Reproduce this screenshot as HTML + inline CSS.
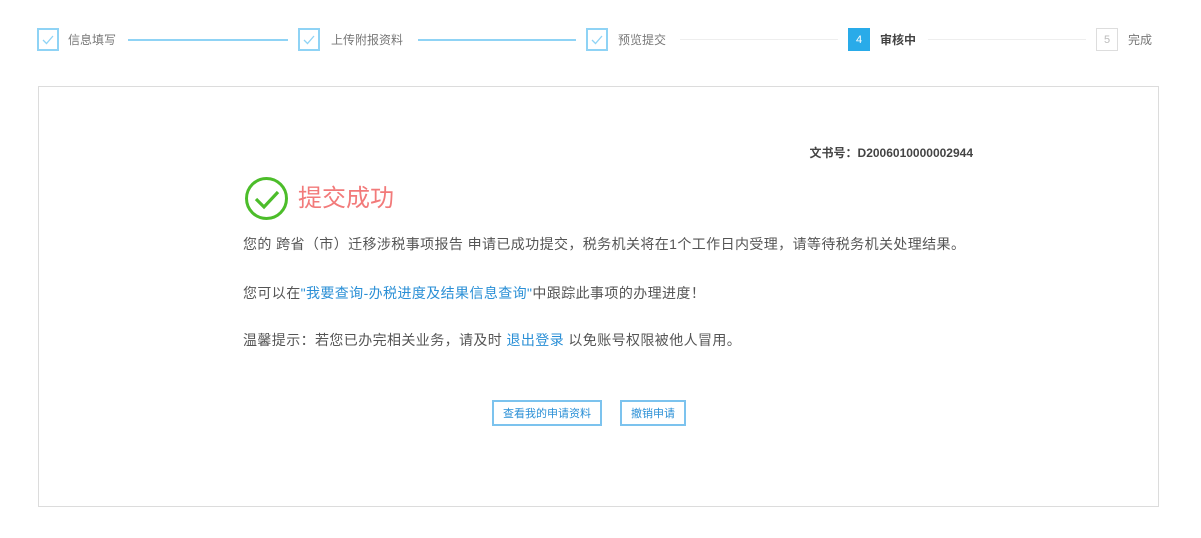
<!DOCTYPE html>
<html><head><meta charset="utf-8"><style>
*{margin:0;padding:0;box-sizing:border-box}
body{width:1201px;height:538px;background:#fff;font-family:"Liberation Sans","Noto Sans CJK SC",sans-serif;position:relative;overflow:hidden;color:#555}
.a{position:absolute}
.box{position:absolute;top:28px;width:22px;height:23px;border:2px solid #8fd3f5;display:flex;align-items:center;justify-content:center}
.lbl{position:absolute;top:32px;font-size:12px;color:#777;line-height:16px}
.ln{position:absolute;top:39px;height:2px}
p{position:absolute;left:243px;font-size:14px;letter-spacing:0.4px;color:#555;white-space:nowrap;line-height:18px}
.lk{color:#2a8fd6}
.btn{position:absolute;top:400px;height:26px;border:2px solid #7cc3ee;font-size:11px;color:#2a8fd6;display:flex;align-items:center;justify-content:center}
</style></head><body>
<div class="box" style="left:37px"><svg width="14" height="12"><path d="M2 6l3.5 3.5L12 2" fill="none" stroke="#8fd3f5" stroke-width="1.3"/></svg></div>
<div class="lbl" style="left:68px">信息填写</div>
<div class="ln" style="left:128px;width:160px;background:#8fd3f5"></div>
<div class="box" style="left:298px"><svg width="14" height="12"><path d="M2 6l3.5 3.5L12 2" fill="none" stroke="#8fd3f5" stroke-width="1.3"/></svg></div>
<div class="lbl" style="left:331px">上传附报资料</div>
<div class="ln" style="left:418px;width:158px;background:#8fd3f5"></div>
<div class="box" style="left:586px"><svg width="14" height="12"><path d="M2 6l3.5 3.5L12 2" fill="none" stroke="#8fd3f5" stroke-width="1.3"/></svg></div>
<div class="lbl" style="left:618px">预览提交</div>
<div class="ln" style="left:680px;width:158px;background:#eee;height:1px"></div>
<div class="box" style="left:848px;background:#29abe9;border-color:#29abe9;color:#fff;font-size:11px">4</div>
<div class="lbl" style="left:880px;color:#444;font-weight:bold">审核中</div>
<div class="ln" style="left:928px;width:158px;background:#eee;height:1px"></div>
<div class="box" style="left:1096px;border:1px solid #ddd;color:#bbb;font-size:11px">5</div>
<div class="lbl" style="left:1128px">完成</div>

<div class="a" style="left:38px;top:86px;width:1121px;height:421px;border:1px solid #dcdcdc"></div>
<div class="a" style="right:228px;top:144px;font-size:12px;font-weight:bold;color:#444">文书号：D2006010000002944</div>
<svg class="a" style="left:244px;top:176px" width="45" height="45"><circle cx="22.5" cy="22.5" r="20" fill="none" stroke="#4cbd2a" stroke-width="3"/><path d="M12 23l8 8 14-15" fill="none" stroke="#4cbd2a" stroke-width="3.2"/></svg>
<div class="a" style="left:298px;top:184px;font-size:24px;color:#f27a7a;line-height:30px">提交成功</div>
<p style="top:235px">您的 跨省（市）迁移涉税事项报告 申请已成功提交，税务机关将在1个工作日内受理，请等待税务机关处理结果。</p>
<p style="top:284px">您可以在<span class="lk">"我要查询-办税进度及结果信息查询"</span>中跟踪此事项的办理进度！</p>
<p style="top:331px">温馨提示：若您已办完相关业务，请及时 <span class="lk">退出登录</span> 以免账号权限被他人冒用。</p>
<div class="btn" style="left:492px;width:110px">查看我的申请资料</div>
<div class="btn" style="left:620px;width:66px">撤销申请</div>
</body></html>
